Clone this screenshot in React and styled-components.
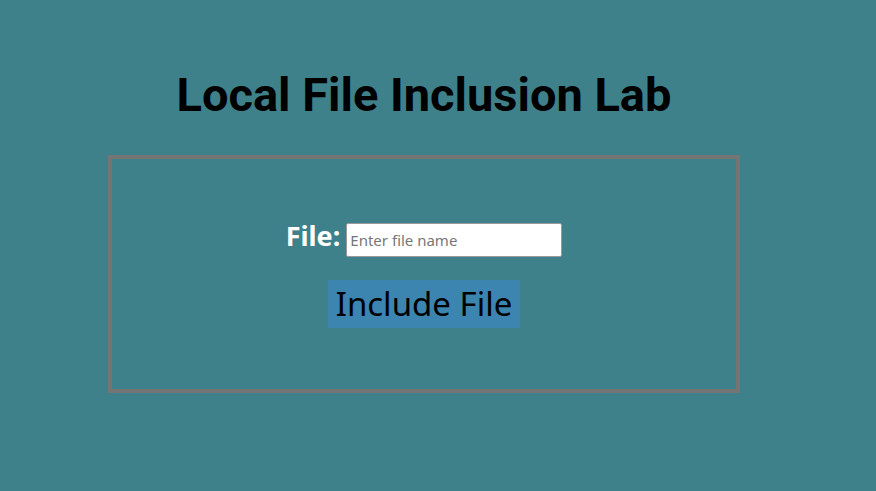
import React, { useState } from 'react'
import styled, { createGlobalStyle } from 'styled-components'

const GlobalStyle = createGlobalStyle`
    body {
        margin: 0;
        background: #3e818b;
        font-family: "Noto Sans", "Open Sans", sans-serif;
    }
`

const Page = styled.div`
    width: 632px;
    margin-left: 108px;
    padding-top: 67px;
`

const Title = styled.h1`
    margin: 0 0 32px;
    text-align: center;
    font-family: Roboto, "Liberation Sans", sans-serif;
    font-weight: 700;
    font-size: 47px;
    line-height: 56px;
    color: #000;
`

const Panel = styled.form`
    box-sizing: border-box;
    height: 238px;
    border: 4px solid #757575;
    display: flex;
    flex-direction: column;
    align-items: center;
    justify-content: center;
    gap: 23px;
    padding-bottom: 2px;
`

const Row = styled.div`
    display: flex;
    align-items: baseline;
    gap: 6px;
`

const Label = styled.label`
    font-weight: 700;
    font-size: 27px;
    line-height: 34px;
    color: #fff;
`

const FileInput = styled.input`
    box-sizing: border-box;
    width: 216px;
    height: 34px;
    padding: 0 3px;
    border: 1px solid #999;
    border-radius: 2px;
    font-family: "Noto Sans", sans-serif;
    font-size: 15px;
    &::placeholder { color: #777; }
`

const SubmitButton = styled.button`
    height: 48px;
    padding: 0 8px;
    border: none;
    background: #3b85b0;
    color: #000;
    font-family: "Noto Sans", sans-serif;
    font-size: 33px;
    cursor: pointer;
`

const App = () => {
    const [file, setFile] = useState('')
    return (
        <>
        <GlobalStyle/>
        <Page>
            <Title>Local File Inclusion Lab</Title>
            <Panel onSubmit={e => e.preventDefault()}>
                <Row>
                    <Label htmlFor='file'>File:</Label>
                    <FileInput id='file' value={file} onChange={e => setFile(e.target.value)} placeholder='Enter file name'/>
                </Row>
                <SubmitButton type='submit'>Include File</SubmitButton>
            </Panel>
        </Page>
        </>
    )
}

export default App
